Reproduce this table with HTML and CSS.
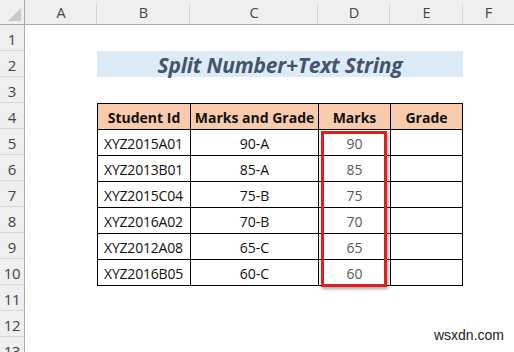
FILE: index.html
```html
<!DOCTYPE html>
<html>
<head>
<meta charset="utf-8">
<link rel="stylesheet" href="styles.css">
</head>
<body>
<div class="sheet">
  <div class="corner"><svg width="25" height="25" viewBox="0 0 25 25"><polygon points="21,8 21,21 8,21" fill="#c9c9c9"/></svg></div>
  <div class="colh">A</div>
  <div class="colh">B</div>
  <div class="colh">C</div>
  <div class="colh">D</div>
  <div class="colh">E</div>
  <div class="colh last">F</div>

  <div class="rowh r1">1</div>
  <div class="rowh r2">2</div>
  <div class="rowh r3">3</div>
  <div class="rowh r4">4</div>
  <div class="rowh r5">5</div>
  <div class="rowh r6">6</div>
  <div class="rowh r7">7</div>
  <div class="rowh r8">8</div>
  <div class="rowh r9">9</div>
  <div class="rowh r10">10</div>
  <div class="rowh r11">11</div>
  <div class="rowh r12">12</div>
  <div class="rowh r13">13</div>

  <div class="title">Split Number+Text String</div>

  <div class="table">
    <div class="th">Student Id</div>
    <div class="th">Marks and Grade</div>
    <div class="th">Marks</div>
    <div class="th">Grade</div>

    <div class="td left">XYZ2015A01</div><div class="td">90-A</div><div class="td num">90</div><div class="td"></div>
    <div class="td left">XYZ2013B01</div><div class="td">85-A</div><div class="td num">85</div><div class="td"></div>
    <div class="td left">XYZ2015C04</div><div class="td">75-B</div><div class="td num">75</div><div class="td"></div>
    <div class="td left">XYZ2016A02</div><div class="td">70-B</div><div class="td num">70</div><div class="td"></div>
    <div class="td left">XYZ2012A08</div><div class="td">65-C</div><div class="td num">65</div><div class="td"></div>
    <div class="td left">XYZ2016B05</div><div class="td">60-C</div><div class="td num">60</div><div class="td"></div>
  </div>

  <div class="highlight"></div>

  <div class="watermark">wsxdn.com</div>
</div>
</body>
</html>
```

FILE: styles.css
```css
html, body {
  margin: 0;
  padding: 0;
  background: #ffffff;
  overflow: hidden;
}

.sheet {
  width: 514px;
  height: 352px;
  display: grid;
  grid-template-columns: 25px 72px 93px 128px 72px 73px 1fr;
  grid-template-rows: 25px repeat(13, 26px);
  font-family: "Open Sans", "Noto Sans", sans-serif;
  overflow: hidden;
  background: #ffffff;
}

.corner {
  grid-column: 1;
  grid-row: 1;
  background: #efefef;
  border-right: 1px solid #ababab;
  border-bottom: 1px solid #ababab;
  box-sizing: border-box;
}
.corner svg { display: block; }

.colh {
  grid-row: 1;
  background: #efefef;
  border-bottom: 1px solid #ababab;
  box-sizing: border-box;
  display: flex;
  align-items: center;
  justify-content: center;
  font-size: 14.5px;
  color: #444444;
  position: relative;
}
.colh::after {
  content: "";
  position: absolute;
  right: 0;
  top: 4px;
  bottom: 0;
  width: 1px;
  background: #d4d4d4;
}
.colh.last::after { display: none; }

.rowh {
  grid-column: 1;
  background: #efefef;
  border-right: 1px solid #ababab;
  border-bottom: 1px solid #d8d8d8;
  box-sizing: border-box;
  display: flex;
  align-items: center;
  justify-content: center;
  font-size: 15px;
  color: #444444;
  padding-top: 2px;
  letter-spacing: -0.3px;
}
.r1 { grid-row: 2; }
.r2 { grid-row: 3; }
.r3 { grid-row: 4; }
.r4 { grid-row: 5; }
.r5 { grid-row: 6; }
.r6 { grid-row: 7; }
.r7 { grid-row: 8; }
.r8 { grid-row: 9; }
.r9 { grid-row: 10; }
.r10 { grid-row: 11; }
.r11 { grid-row: 12; }
.r12 { grid-row: 13; }
.r13 { grid-row: 14; }

.title {
  grid-column: 3 / 7;
  grid-row: 3;
  background: #ddebf7;
  display: flex;
  align-items: center;
  justify-content: center;
  font-weight: 700;
  font-style: italic;
  font-size: 21px;
  color: #44546a;
  letter-spacing: -0.2px;
  padding-top: 1px;
}

.table {
  grid-column: 3 / 7;
  grid-row: 5 / 12;
  align-self: start;
  display: grid;
  grid-template-columns: 92px 127px 71px 71px;
  grid-auto-rows: 25px;
  gap: 1px;
  padding: 1px;
  background: #000000;
  font-size: 14px;
  color: #111111;
}

.th {
  background: #f8cbad;
  font-weight: 700;
  display: flex;
  align-items: center;
  justify-content: center;
  padding-top: 1px;
}

.td {
  background: #ffffff;
  display: flex;
  align-items: center;
  justify-content: center;
  padding-top: 1px;
}
.td.left {
  justify-content: flex-start;
  padding-left: 6px;
  letter-spacing: -0.2px;
}
.td.num {
  color: #595959;
  align-items: flex-end;
  padding-bottom: 2px;
}

.highlight {
  grid-column: 5;
  grid-row: 6 / 12;
  margin: 2px 3px -2px 3px;
  border: 3px solid #e01e1e;
  box-shadow: 1px 2px 3px rgba(0, 0, 0, 0.35);
  z-index: 2;
}

.watermark {
  grid-column: 6 / 8;
  grid-row: 13 / 15;
  justify-self: end;
  align-self: start;
  margin-top: 16px;
  margin-right: 10px;
  font-family: "Liberation Sans", Arial, sans-serif;
  font-size: 14px;
  color: #222222;
}
```
